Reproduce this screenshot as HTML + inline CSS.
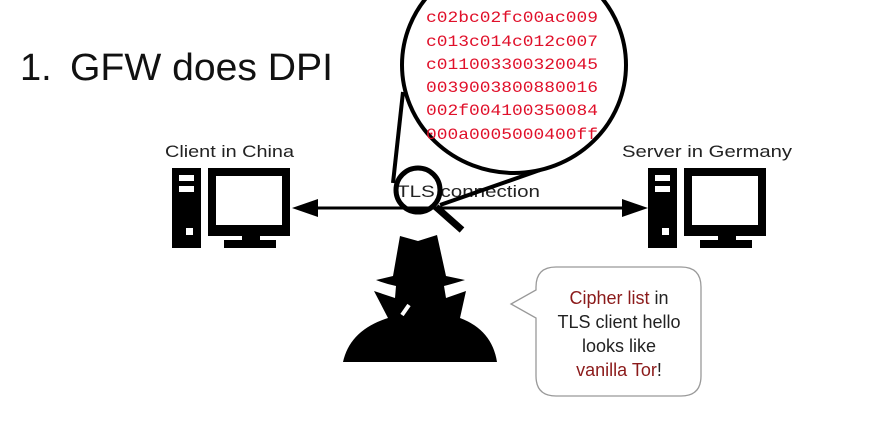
<!DOCTYPE html>
<html><head><meta charset="utf-8"><style>
html,body{margin:0;padding:0;background:#fff;width:869px;height:434px;overflow:hidden}
svg{display:block}
</style></head><body>
<svg width="869" height="434" viewBox="0 0 869 434" xmlns="http://www.w3.org/2000/svg">
<rect width="869" height="434" fill="#fff"/>
<text x="20" y="80" font-family="Liberation Sans, sans-serif" font-size="38" fill="#111">1.</text>
<text x="70" y="80" font-family="Liberation Sans, sans-serif" font-size="38" fill="#111" textLength="263" lengthAdjust="spacingAndGlyphs">GFW does DPI</text>
<text x="165" y="157" font-family="Liberation Sans, sans-serif" font-size="17" fill="#222" textLength="129" lengthAdjust="spacingAndGlyphs">Client in China</text>
<text x="622" y="157" font-family="Liberation Sans, sans-serif" font-size="17" fill="#222" textLength="170" lengthAdjust="spacingAndGlyphs">Server in Germany</text>
<g id="pc">
<rect x="172" y="168" width="29" height="80" fill="#000"/>
<rect x="179" y="175" width="15" height="6" fill="#fff"/>
<rect x="179" y="186" width="15" height="6" fill="#fff"/>
<rect x="186" y="228" width="7" height="7" fill="#fff"/>
<rect x="208" y="168" width="82" height="68" fill="#000"/>
<rect x="216" y="176" width="66" height="49" fill="#fff"/>
<rect x="242" y="235" width="18" height="6" fill="#000"/>
<rect x="224" y="240" width="52" height="8" fill="#000"/>
</g>
<use href="#pc" transform="translate(476,0)"/>
<line x1="310" y1="208" x2="630" y2="208" stroke="#000" stroke-width="3"/>
<polygon points="292,208 318,199 318,217" fill="#000"/>
<polygon points="648,208 622,199 622,217" fill="#000"/>
<text x="397" y="197" font-family="Liberation Sans, sans-serif" font-size="17" fill="#222" textLength="143" lengthAdjust="spacingAndGlyphs">TLS connection</text>
<line x1="393" y1="183" x2="403" y2="92" stroke="#000" stroke-width="4"/>
<line x1="440" y1="205" x2="540" y2="170" stroke="#000" stroke-width="4"/>
<ellipse cx="514" cy="65" rx="112" ry="108" fill="#fff" stroke="#000" stroke-width="4"/>
<circle cx="418" cy="190" r="22" fill="none" stroke="#000" stroke-width="5"/>
<line x1="436" y1="207" x2="462" y2="230" stroke="#000" stroke-width="7"/>
<g font-family="Liberation Mono, monospace" font-size="16" fill="#e0102a">
<text x="426" y="22" textLength="172" lengthAdjust="spacingAndGlyphs">c02bc02fc00ac009</text>
<text x="426" y="46" textLength="172" lengthAdjust="spacingAndGlyphs">c013c014c012c007</text>
<text x="426" y="69" textLength="172" lengthAdjust="spacingAndGlyphs">c011003300320045</text>
<text x="426" y="92" textLength="172" lengthAdjust="spacingAndGlyphs">0039003800880016</text>
<text x="426" y="115" textLength="172" lengthAdjust="spacingAndGlyphs">002f004100350084</text>
<text x="426" y="139" textLength="172" lengthAdjust="spacingAndGlyphs">000a0005000400ff</text>
</g>
<path fill="#000" d="M400,236 L418,241 L437,235 L446,276 L465,280 Q452,284 444,286 L446,298 L466,291 L460,318 Q492,330 497,362 L343,362 Q350,330 388,318 L374,291 L395,298 L396,286 Q386,284 376,280 L393,276 Z"/>
<line x1="402" y1="315" x2="409" y2="305" stroke="#fff" stroke-width="4"/>
<path d="M556,267 L681,267 Q701,267 701,287 L701,376 Q701,396 681,396 L556,396 Q536,396 536,376 L536,318 L511,304 L536,290 L536,287 Q536,267 556,267 Z" fill="#fff" stroke="#999" stroke-width="1.3"/>
<g font-family="Liberation Sans, sans-serif" font-size="18" text-anchor="middle" fill="#222">
<text x="619" y="304"><tspan fill="#8b1a1a">Cipher list</tspan> in</text>
<text x="619" y="328">TLS client hello</text>
<text x="619" y="352">looks like</text>
<text x="619" y="376"><tspan fill="#8b1a1a">vanilla Tor</tspan>!</text>
</g>
</svg>
</body></html>
